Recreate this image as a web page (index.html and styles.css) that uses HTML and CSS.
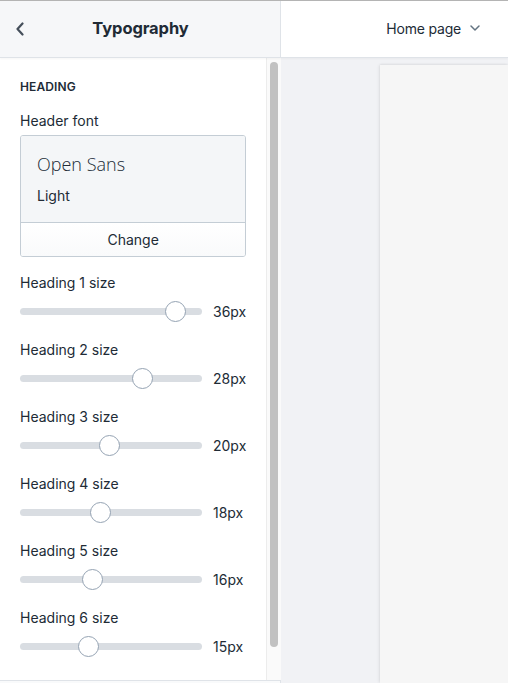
FILE: index.html
```html
<!DOCTYPE html>
<html>
<head>
<meta charset="utf-8">
<link rel="stylesheet" href="styles.css">
</head>
<body>
<div class="app">
  <div class="topbar">
    <div class="topbar-left">
      <button class="back" aria-label="Back">
        <svg width="10" height="14" viewBox="0 0 10 14"><path d="M7.5 1.5 L2.5 7 L7.5 12.5" fill="none" stroke="#454f5b" stroke-width="2.2" stroke-linecap="round" stroke-linejoin="round"/></svg>
      </button>
      <div class="title">Typography</div>
    </div>
    <div class="topbar-right">
      <span class="page-select">Home page</span>
      <svg width="12" height="8" viewBox="0 0 12 8"><path d="M2 2 L6 6 L10 2" fill="none" stroke="#637381" stroke-width="1.5" stroke-linecap="round" stroke-linejoin="round"/></svg>
    </div>
  </div>
  <div class="main">
    <div class="sidebar">
      <div class="sidebar-body">
        <div class="content">
          <div class="section-title">HEADING</div>
          <div class="label">Header font</div>
          <div class="font-card">
            <div class="font-preview">
              <div class="font-name">Open Sans</div>
              <div class="font-weight">Light</div>
            </div>
            <div class="font-change">Change</div>
          </div>
          <div class="fields">
            <div class="field">
              <div class="label">Heading 1 size</div>
              <div class="slider-row">
                <div class="track"><div class="thumb" style="left:145px"></div></div>
                <span class="value">36px</span>
              </div>
            </div>
            <div class="field">
              <div class="label">Heading 2 size</div>
              <div class="slider-row">
                <div class="track"><div class="thumb" style="left:112px"></div></div>
                <span class="value">28px</span>
              </div>
            </div>
            <div class="field">
              <div class="label">Heading 3 size</div>
              <div class="slider-row">
                <div class="track"><div class="thumb" style="left:79px"></div></div>
                <span class="value">20px</span>
              </div>
            </div>
            <div class="field">
              <div class="label">Heading 4 size</div>
              <div class="slider-row">
                <div class="track"><div class="thumb" style="left:70px"></div></div>
                <span class="value">18px</span>
              </div>
            </div>
            <div class="field">
              <div class="label">Heading 5 size</div>
              <div class="slider-row">
                <div class="track"><div class="thumb" style="left:62px"></div></div>
                <span class="value">16px</span>
              </div>
            </div>
            <div class="field">
              <div class="label">Heading 6 size</div>
              <div class="slider-row">
                <div class="track"><div class="thumb" style="left:58px"></div></div>
                <span class="value">15px</span>
              </div>
            </div>
          </div>
        </div>
        <div class="scrollbar"><div class="scroll-thumb"></div></div>
      </div>
      <div class="sidebar-footer"></div>
    </div>
    <div class="canvas">
      <div class="preview"></div>
    </div>
  </div>
</div>
</body>
</html>
```

FILE: styles.css
```css
* { box-sizing: border-box; }
html, body {
  margin: 0;
  padding: 0;
  width: 508px;
  height: 683px;
  overflow: hidden;
  background: #ffffff;
}
body {
  font-family: Inter, "Noto Sans", "Liberation Sans", sans-serif;
  color: #212b36;
  font-size: 14px;
}
.app {
  height: 683px;
  display: flex;
  flex-direction: column;
  border-top: 1px solid #b4b4b4;
}
.topbar {
  height: 57px;
  flex: none;
  display: flex;
  border-bottom: 1px solid #dfe3e8;
  box-shadow: 0 1px 2px rgba(0,0,0,0.04);
  position: relative;
  z-index: 1;
}
.topbar-left {
  width: 281px;
  flex: none;
  background: #f6f7f9;
  border-right: 1px solid #dfe3e8;
  display: flex;
  align-items: center;
  justify-content: center;
  padding-bottom: 2px;
  position: relative;
}
.back {
  position: absolute;
  left: 14px;
  top: 20px;
  width: 12px;
  height: 16px;
  padding: 0;
  border: 0;
  background: transparent;
  display: flex;
  align-items: center;
  justify-content: center;
}
.title {
  font-size: 16.5px;
  font-weight: 700;
  color: #212b36;
  letter-spacing: -0.1px;
  margin-left: 1px;
}
.topbar-right {
  flex: 1;
  background: #ffffff;
  display: flex;
  align-items: center;
  justify-content: flex-end;
  padding-right: 27px;
  padding-bottom: 2px;
  gap: 8px;
}
.page-select {
  font-size: 14px;
  letter-spacing: -0.2px;
  color: #212b36;
}
.main {
  flex: 1;
  display: flex;
  min-height: 0;
}
.sidebar {
  width: 281px;
  flex: none;
  display: flex;
  flex-direction: column;
  border-right: 1px solid #dfe3e8;
  background: #ffffff;
}
.sidebar-body {
  flex: 1;
  display: flex;
  min-height: 0;
}
.sidebar-footer {
  height: 3px;
  flex: none;
  border-top: 1px solid #dfe3e8;
  background: #f9fafb;
}
.content {
  flex: 1;
  padding: 21px 20px 0 20px;
  display: flex;
  flex-direction: column;
}
.section-title {
  font-size: 12px;
  font-weight: 600;
  line-height: 16px;
  letter-spacing: 0.1px;
  color: #212b36;
}
.label {
  font-size: 14px;
  line-height: 20px;
  color: #212b36;
}
.section-title + .label {
  margin-top: 16px;
}
.font-card {
  margin-top: 4px;
  border: 1px solid #c4cdd5;
  border-radius: 3px;
  overflow: hidden;
}
.font-preview {
  background: #f4f6f8;
  padding: 16px 16px 16px 16px;
  border-bottom: 1px solid #c4cdd5;
}
.font-name {
  font-family: "Open Sans", sans-serif;
  font-weight: 300;
  font-size: 18px;
  line-height: 24px;
  color: #212b36;
}
.font-weight {
  margin-top: 10px;
  font-size: 14px;
  line-height: 20px;
}
.font-change {
  height: 33px;
  display: flex;
  align-items: center;
  justify-content: center;
  background: linear-gradient(#ffffff, #f9fafb);
  font-size: 14px;
}
.fields {
  margin-top: 16px;
  display: flex;
  flex-direction: column;
  gap: 19px;
}
.field {
  display: flex;
  flex-direction: column;
  gap: 8px;
}
.slider-row {
  height: 20px;
  display: flex;
  align-items: center;
  gap: 11px;
}
.track {
  width: 182px;
  height: 7px;
  border-radius: 4px;
  background: #d9dde2;
  position: relative;
}
.thumb {
  position: absolute;
  top: -7px;
  width: 21px;
  height: 21px;
  border-radius: 50%;
  background: #ffffff;
  border: 1px solid #95a3b3;
}
.value {
  font-size: 14px;
  color: #212b36;
}
.scrollbar {
  width: 15px;
  flex: none;
  background: #fafafa;
  border-left: 1px solid #ececec;
  padding: 4px 3px 33px 3px;
  display: flex;
}
.scroll-thumb {
  flex: 1;
  background: #c1c1c1;
  border-radius: 4px;
}
.canvas {
  flex: 1;
  background: #f1f2f5;
  padding: 7px 0 0 99px;
  display: flex;
}
.preview {
  flex: 1;
  background: #f6f6f6;
  box-shadow: -1px 0 3px rgba(0,0,0,0.08), 0 -1px 2px rgba(0,0,0,0.05);
}
```
